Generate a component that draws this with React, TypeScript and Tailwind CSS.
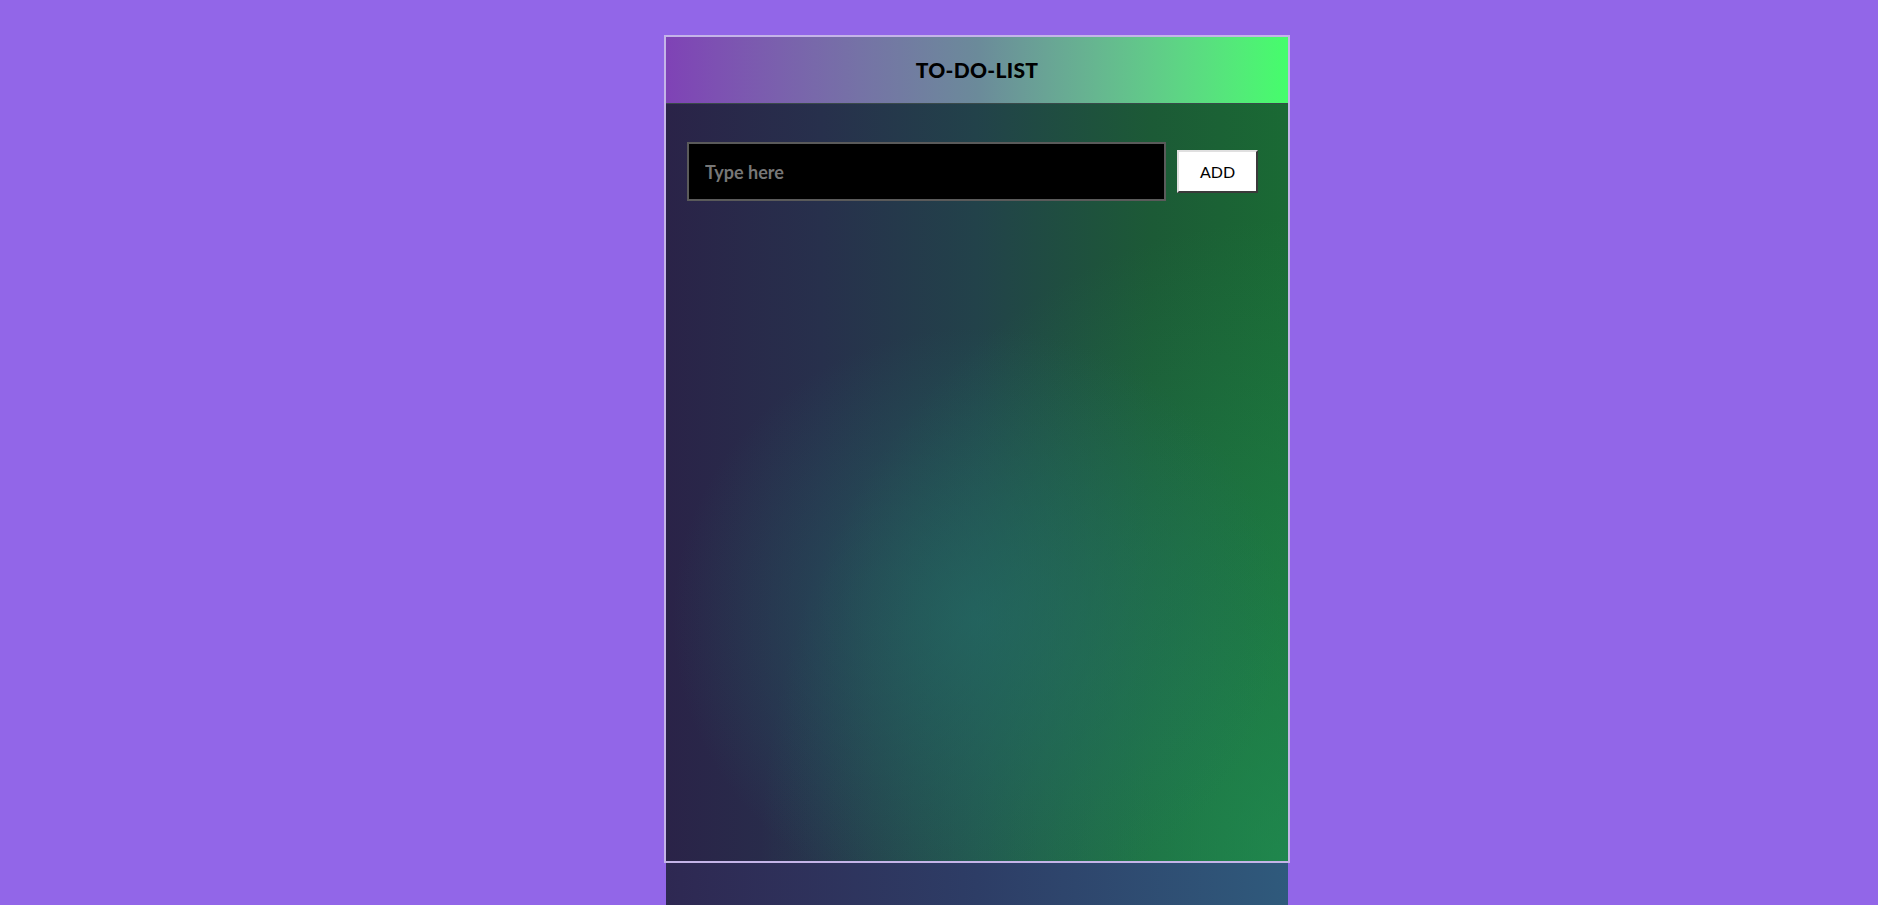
const App = () => {
  return (
    <div className="min-h-screen bg-[#9266e8] flex flex-col items-center pt-[35px] pl-[76px] overflow-hidden h-[905px]" style={{ fontFamily: "Lato, 'Open Sans', sans-serif" }}>
      <div className="w-[626px] border-2 border-[#c4b4e8] flex flex-col">
        <div className="h-[66px] flex items-center justify-center bg-linear-to-r from-[#7f42b6] via-[#6b8a9a] to-[#45fd6b]">
          <h1 className="text-[21px] font-black text-black tracking-[0.3px]">TO-DO-LIST</h1>
        </div>
        <div className="h-[758px] border-t border-[#3a4a4a] bg-[radial-gradient(ellipse_70%_55%_at_50%_68%,rgba(36,110,105,0.6)_0%,rgba(36,110,105,0)_70%),radial-gradient(ellipse_at_100%_100%,rgba(34,150,90,0.65)_0%,rgba(34,150,90,0)_60%),linear-gradient(to_right,#2a2348_0%,#27304c_25%,#22424a_50%,#1c5a36_78%,#1a6a34_100%)] pl-[21px] pt-[38px]">
          <div className="flex items-center gap-[11px]">
            <input
              type="text"
              placeholder="Type here"
              className="w-[479px] h-[59px] bg-black border-2 border-[#5a5a5a] px-4 text-[18px] font-bold text-white placeholder:text-[#777777] outline-none"
            />
            <button className="w-[81px] h-[43px] bg-white border-2 border-t-[#e0e0e0] border-l-[#e0e0e0] border-r-[#3a3a3a] border-b-[#3a3a3a] text-[16px] text-black">
              ADD
            </button>
          </div>
        </div>
      </div>
      <div className="w-[622px] h-[60px] bg-linear-to-r from-[#2e2852] via-[#2d3d66] to-[#2f5a7c]" />
    </div>
  );
};

export default App;
